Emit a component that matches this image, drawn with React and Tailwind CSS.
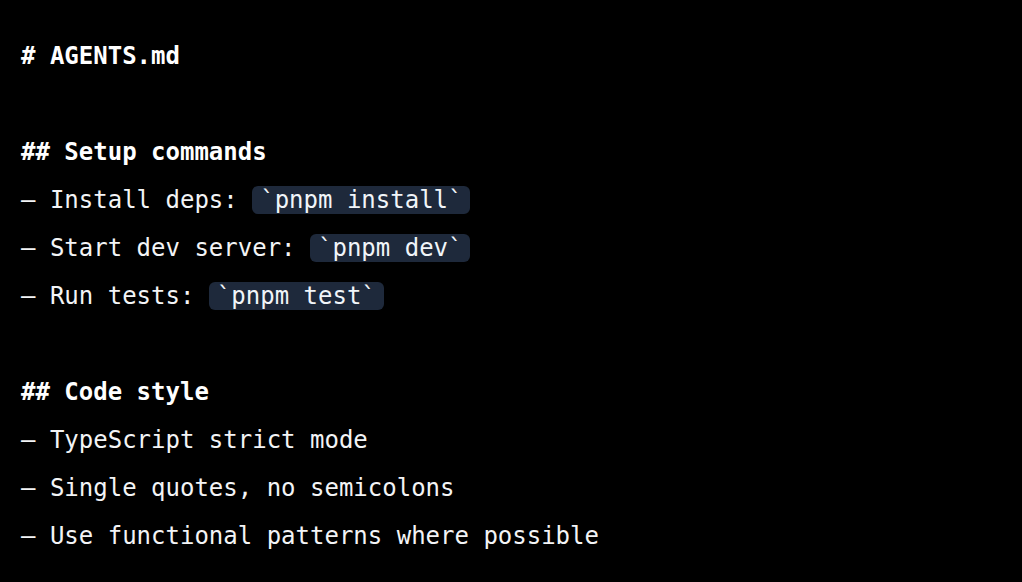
export default function App() {
  const Code = ({ children }) => (
    <span className="rounded-md bg-[#1e293b] px-2 text-[#f1f5f9]">{children}</span>
  );
  return (
    <div
      className="w-[1022px] h-[582px] bg-black text-[#f3f4f6] pl-[21px] pt-8 text-[24px] leading-[48px] whitespace-pre overflow-hidden"
      style={{ fontFamily: '"DejaVu Sans Mono", monospace' }}
    >
      <div className="font-bold text-white"># AGENTS.md</div>
      <div>&nbsp;</div>
      <div className="font-bold text-white">## Setup commands</div>
      <div>– Install deps: <Code>`pnpm install`</Code></div>
      <div>– Start dev server: <Code>`pnpm dev`</Code></div>
      <div>– Run tests: <Code>`pnpm test`</Code></div>
      <div>&nbsp;</div>
      <div className="font-bold text-white">## Code style</div>
      <div>– TypeScript strict mode</div>
      <div>– Single quotes, no semicolons</div>
      <div>– Use functional patterns where possible</div>
    </div>
  );
}
